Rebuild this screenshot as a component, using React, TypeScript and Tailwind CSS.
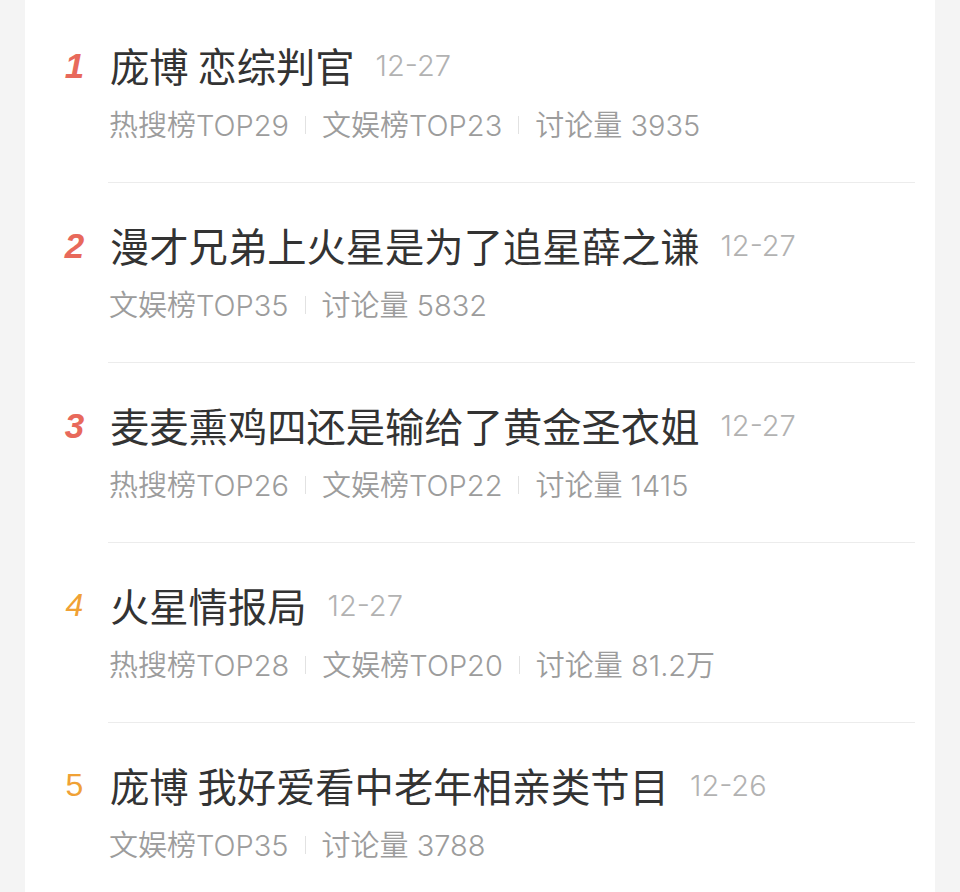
const items = [
  { rank: 1, title: "庞博 恋综判官", date: "12-27", tags: ["热搜榜TOP29", "文娱榜TOP23", "讨论量 3935"] },
  { rank: 2, title: "漫才兄弟上火星是为了追星薛之谦", date: "12-27", tags: ["文娱榜TOP35", "讨论量 5832"] },
  { rank: 3, title: "麦麦熏鸡四还是输给了黄金圣衣姐", date: "12-27", tags: ["热搜榜TOP26", "文娱榜TOP22", "讨论量 1415"] },
  { rank: 4, title: "火星情报局", date: "12-27", tags: ["热搜榜TOP28", "文娱榜TOP20", "讨论量 81.2万"] },
  { rank: 5, title: "庞博 我好爱看中老年相亲类节目", date: "12-26", tags: ["文娱榜TOP35", "讨论量 3788"] },
];

function Rank({ n }: { n: number }) {
  if (n <= 3) {
    return (
      <span className="font-['Liberation_Sans',sans-serif] text-[35px] font-bold italic leading-none text-[#e8695b]">
        {n}
      </span>
    );
  }
  return (
    <span className={`font-['Liberation_Sans',sans-serif] text-[32px] leading-none text-[#f0a135] ${n === 4 ? "italic" : ""}`}>
      {n}
    </span>
  );
}

export default function App() {
  return (
    <div className="min-h-screen bg-[#f4f4f4] font-['Inter','Noto_Sans_CJK_SC',sans-serif]">
      <div className="mx-[25px] min-h-[892px] bg-white pt-[3px]">
        {items.map((item) => (
          <div key={item.rank} className="flex">
            <div className="flex h-[86px] w-[83px] shrink-0 items-center justify-center pt-[38px] pl-[16px]">
              <Rank n={item.rank} />
            </div>
            <div className="mr-[20px] flex-1 border-b border-[#ececec] pb-[37px] pt-[38px]">
              <div className="flex h-[48px] items-center">
                <span className="ml-[2px] font-['Noto_Sans_CJK_SC',sans-serif] text-[39.3px] leading-none text-[#333333]">{item.title}</span>
                <span className="ml-[21px] text-[29px] font-light leading-none text-[#b2b2b2]">{item.date}</span>
              </div>
              <div className="mt-[16px] flex h-[40px] items-center pl-[1px] text-[29px] font-[350] leading-none text-[#9c9c9c]">
                {item.tags.map((t, i) => (
                  <div key={t} className="flex items-center">
                    {i > 0 && <span className="mx-[16px] h-[18px] w-px bg-[#e2e2e2]" />}
                    <span>{t}</span>
                  </div>
                ))}
              </div>
            </div>
          </div>
        ))}
      </div>
    </div>
  );
}
